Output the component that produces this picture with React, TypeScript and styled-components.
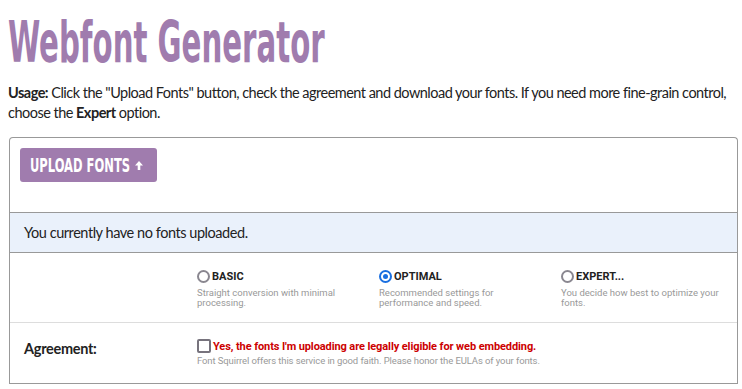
import React from "react";
import styled, { createGlobalStyle } from "styled-components";

const GlobalStyle = createGlobalStyle`
  html {
    overflow: hidden;
  }
  body {
    margin: 8px 0 8px 8px;
    background: #fff;
    font-family: "Lato", "Noto Sans", sans-serif;
    color: #222;
  }
`;

const Page = styled.div`
  width: 732px;
`;

const Title = styled.h1`
  margin: 0;
  padding-top: 2px;
  height: 62px;
  font-family: "DejaVu Sans Condensed", "DejaVu Sans", sans-serif;
  font-weight: bold;
  font-size: 57px;
  line-height: 64px;
  color: #a07cae;
  white-space: nowrap;

  span {
    display: inline-block;
    transform: scaleX(0.57);
    transform-origin: left center;
  }
`;

const Usage = styled.p`
  margin: 11px 0 14px 0;
  font-size: 14.5px;
  line-height: 20px;
  letter-spacing: -0.52px;
  color: #222;
  white-space: nowrap;

  b {
    font-weight: bold;
  }
`;

const Panel = styled.div`
  border: 1px solid #999;
  border-bottom: none;
  border-radius: 4px 4px 0 0;
  margin-left: 1px;
  width: 727px;
`;

const UploadSection = styled.div`
  padding: 10px 10px 30px 10px;
  border-bottom: 1px solid #999;
`;

const UploadButton = styled.button`
  display: grid;
  grid-template-columns: 104px 10px;
  align-items: center;
  width: 137px;
  height: 34px;
  padding: 0 0 0 10px;
  border: none;
  border-radius: 3px;
  background: #a07cae;
  color: #fff;
  font-family: "DejaVu Sans Condensed", "DejaVu Sans", sans-serif;
  font-weight: bold;
  font-size: 20px;
  cursor: pointer;

  span {
    display: inline-block;
    white-space: nowrap;
    text-align: left;
    transform: scaleX(0.64);
    transform-origin: left center;
  }
`;

const Notice = styled.div`
  height: 39px;
  display: flex;
  align-items: center;
  padding-left: 14px;
  background: #eaf1fb;
  border-bottom: 1px solid #999;
  font-size: 14.5px;
  letter-spacing: -0.45px;
  color: #222;
`;

const Row = styled.div<{ $bottom: string }>`
  display: grid;
  grid-template-columns: 187px 1fr;
  border-bottom: 1px solid ${(p) => p.$bottom};
`;

const RowLabel = styled.div`
  padding: 17px 0 0 14px;
  font-weight: bold;
  font-size: 14.5px;
  letter-spacing: -0.3px;
`;

const Options = styled.div`
  display: grid;
  grid-template-columns: 182px 182px 1fr;
  padding: 16px 0 14px 0;
`;

const Option = styled.div`
  display: flex;
  flex-direction: column;
`;

const OptionHead = styled.label`
  display: flex;
  align-items: center;
  gap: 2px;
  font-family: "Roboto", sans-serif;
  font-weight: bold;
  font-size: 11px;
  color: #222;
  height: 15px;
`;

const Radio = styled.span<{ $checked?: boolean }>`
  box-sizing: border-box;
  width: 13px;
  height: 13px;
  border-radius: 50%;
  border: 2px solid ${(p) => (p.$checked ? "#1a6fe0" : "#8a8790")};
  display: flex;
  align-items: center;
  justify-content: center;

  &::after {
    content: "";
    display: ${(p) => (p.$checked ? "block" : "none")};
    width: 5px;
    height: 5px;
    border-radius: 50%;
    background: #1a6fe0;
  }
`;

const Hint = styled.div`
  margin-top: 4px;
  font-family: "Roboto", sans-serif;
  font-size: 9.5px;
  line-height: 10px;
  color: #999;
  width: 165px;
`;

const Agreement = styled.div`
  padding: 16px 0 17px 0;
`;

const CheckLine = styled.label`
  display: flex;
  align-items: center;
  gap: 2px;
  font-family: "Roboto", sans-serif;
  font-weight: bold;
  font-size: 11px;
  letter-spacing: -0.1px;
  color: #cc0000;
`;

const Checkbox = styled.span`
  box-sizing: border-box;
  width: 14px;
  height: 14px;
  border: 2px solid #77737d;
  border-radius: 2px;
`;

const AgreeHint = styled(Hint)`
  width: auto;
  margin-top: 3px;
  letter-spacing: -0.1px;
`;

const options = [
  { name: "BASIC", hint: "Straight conversion with minimal processing.", checked: false },
  { name: "OPTIMAL", hint: "Recommended settings for performance and speed.", checked: true },
  { name: "EXPERT...", hint: "You decide how best to optimize your fonts.", checked: false },
];

export default function App() {
  return (
    <Page>
      <GlobalStyle />
      <Title>
        <span>Webfont Generator</span>
      </Title>
      <Usage>
        <b>Usage:</b> Click the "Upload Fonts" button, check the agreement and download your fonts. If you need more fine-grain control,
        <br />
        choose the <b>Expert</b> option.
      </Usage>
      <Panel>
        <UploadSection>
          <UploadButton>
            <span>UPLOAD FONTS</span>
            <svg width="10" height="11" viewBox="0 0 10 11">
              <path d="M5 1 L9 5.5 L6.3 5.5 L6.3 10 L3.7 10 L3.7 5.5 L1 5.5 Z" fill="#fff" />
            </svg>
          </UploadButton>
        </UploadSection>
        <Notice>You currently have no fonts uploaded.</Notice>
        <Row $bottom="#ddd">
          <RowLabel />
          <Options>
            {options.map((o) => (
              <Option key={o.name}>
                <OptionHead>
                  <Radio $checked={o.checked} />
                  {o.name}
                </OptionHead>
                <Hint>{o.hint}</Hint>
              </Option>
            ))}
          </Options>
        </Row>
        <Row $bottom="#999">
          <RowLabel>Agreement:</RowLabel>
          <Agreement>
            <CheckLine>
              <Checkbox />
              Yes, the fonts I'm uploading are legally eligible for web embedding.
            </CheckLine>
            <AgreeHint>Font Squirrel offers this service in good faith. Please honor the EULAs of your fonts.</AgreeHint>
          </Agreement>
        </Row>
      </Panel>
    </Page>
  );
}
